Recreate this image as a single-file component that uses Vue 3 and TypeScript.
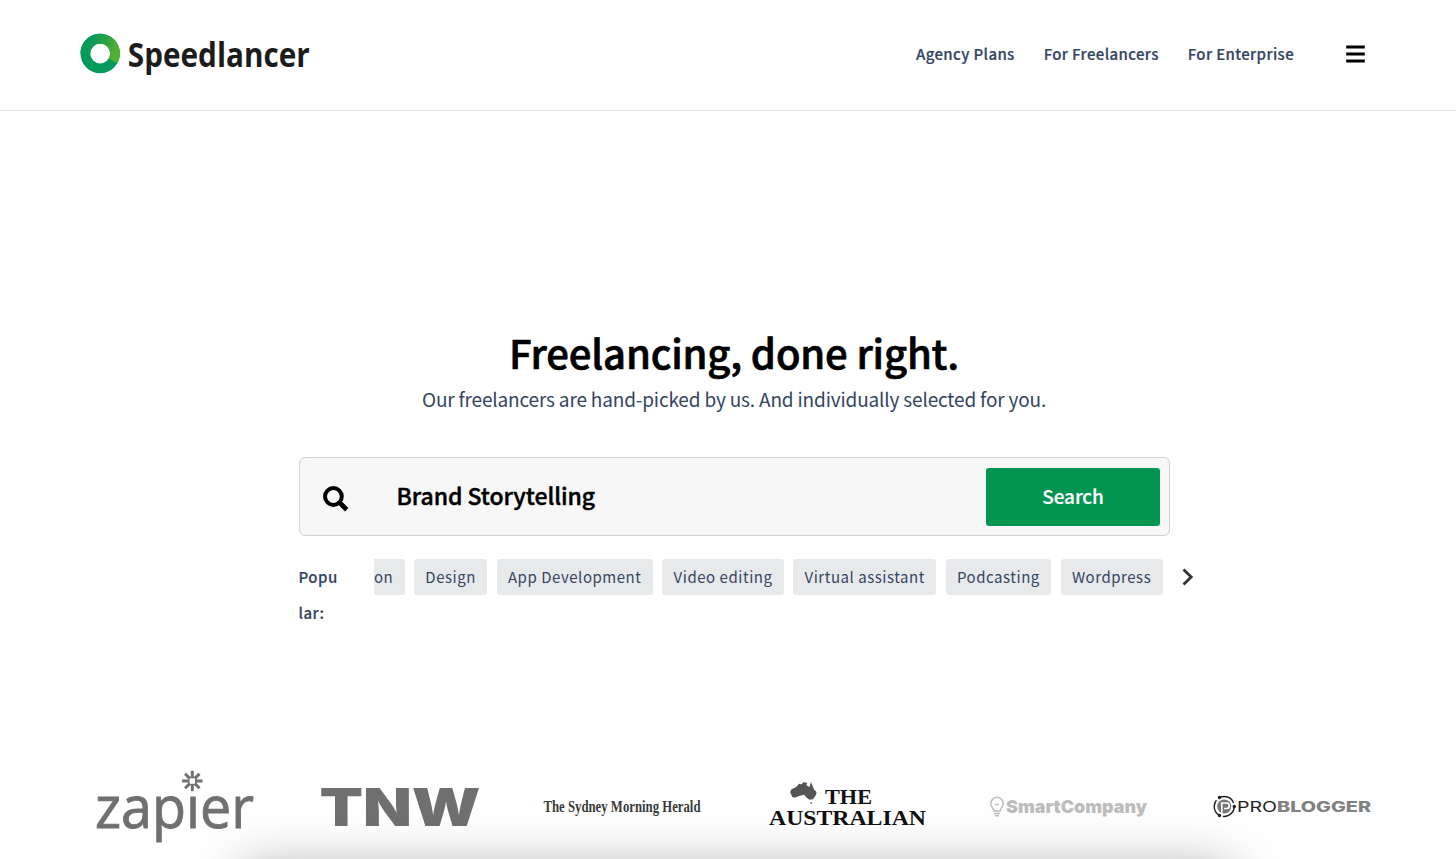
<script setup lang="ts">
interface NavLink {
  id: string
  label: string
}

const links: NavLink[] = [
  { id: 'agency', label: 'Agency Plans' },
  { id: 'freelancers', label: 'For Freelancers' },
  { id: 'enterprise', label: 'For Enterprise' },
]

const tags: string[] = [
  'on',
  'Design',
  'App Development',
  'Video editing',
  'Virtual assistant',
  'Podcasting',
  'Wordpress',
]

const starAngles: number[] = [0, 45, 90, 135, 180, 225, 270, 315]
</script>

<template>
  <div class="page">
    <header class="header">
      <svg class="brand" width="240" height="64" viewBox="0 -4 240 64">
        <defs>
          <linearGradient id="ring" x1="0" y1="0.3" x2="1" y2="0.6">
            <stop offset="0.1" stop-color="#079a5a" />
            <stop offset="0.6" stop-color="#2fa344" />
            <stop offset="1" stop-color="#52b030" />
          </linearGradient>
        </defs>
        <circle cx="20.2" cy="27.5" r="14.8" fill="none" stroke="#049a5c" stroke-width="9.8" />
        <path d="M5.4 27.5A14.8 14.8 0 1 1 33 34.9" fill="none" stroke="url(#ring)" stroke-width="9.8" />
        <text x="47.8" y="40.5" class="brand-text" textLength="182" lengthAdjust="spacingAndGlyphs">Speedlancer</text>
      </svg>

      <nav class="nav">
        <a v-for="link in links" :key="link.id" class="nav-link">{{ link.label }}</a>
        <button class="burger" aria-label="Menu">
          <svg width="19" height="18" viewBox="0 0 19 18">
            <path d="M0.2 2h18.6M0.2 9h18.6M0.2 16h18.6" stroke="#000" stroke-width="3" />
          </svg>
        </button>
      </nav>
    </header>

    <main class="hero">
      <h1 class="title">Freelancing, done right.</h1>
      <p class="subtitle">Our freelancers are hand-picked by us. And individually selected for you.</p>

      <div class="search">
        <svg class="search-icon" width="26" height="26" viewBox="0 0 26 26">
          <circle cx="10.4" cy="10.5" r="8.4" fill="none" stroke="#000" stroke-width="4" />
          <path d="M16.5 16.5L23.7 23.7" stroke="#000" stroke-width="4.8" />
        </svg>
        <span class="search-text">Brand Storytelling</span>
        <button class="search-btn">Search</button>
      </div>

      <div class="popular">
        <span class="popular-label">Popular:</span>
        <div class="tags">
          <span v-for="tag in tags" :key="tag" class="tag">{{ tag }}</span>
        </div>
        <svg class="next" width="12" height="18" viewBox="0 0 12 18">
          <path d="M1.5 1.5L9.2 9L1.5 16.5" fill="none" stroke="#333" stroke-width="2.8" />
        </svg>
      </div>
    </main>

    <section class="logos">
      <!-- zapier -->
      <svg width="158" height="90" viewBox="0 0 158 90">
        <text x="-1" y="63" class="zapier" textLength="159" lengthAdjust="spacingAndGlyphs">zapier</text>
        <rect x="85" y="5" width="22" height="22" fill="#fff" />
        <g stroke="#707070" stroke-width="3">
          <line
            v-for="angle in starAngles"
            :key="angle"
            x1="96.3" y1="12.3" x2="96.3" y2="5.8"
            :transform="`rotate(${angle} 96.3 16)`"
          />
        </g>
        <rect x="92.8" y="12.5" width="7" height="7" fill="none" stroke="#707070" stroke-width="1.5" />
      </svg>

      <!-- TNW -->
      <svg width="158" height="90" viewBox="0 0 158 90">
        <text x="0.5" y="61" class="tnw" textLength="161" lengthAdjust="spacingAndGlyphs">TNW</text>
      </svg>

      <!-- The Sydney Morning Herald -->
      <svg width="158" height="90" viewBox="0 0 158 90">
        <text x="0.5" y="47" class="smh" textLength="157" lengthAdjust="spacingAndGlyphs">The Sydney Morning Herald</text>
      </svg>

      <!-- The Australian -->
      <svg width="158" height="90" viewBox="0 0 158 90">
        <path
          d="M24 28L25.5 25L31 22.5L34 18.8L37 19.5L39.5 17L43.5 18L42.5 20.5L46 22.5L47.5 17L49.5 21L51 25L54 28L53.5 31L50 36L46 36.5L42.5 34L40 31L34 32.5L29 34.5L26.5 33.5Z"
          transform="translate(3 1.8) scale(0.88 0.9)" fill="#555"
        />
        <circle cx="45.2" cy="37.8" r="0.9" fill="#555" />
        <text x="59" y="39" class="australian" textLength="47" lengthAdjust="spacingAndGlyphs">THE</text>
        <text x="3" y="59.5" class="australian" textLength="157" lengthAdjust="spacingAndGlyphs">AUSTRALIAN</text>
      </svg>

      <!-- SmartCompany -->
      <svg width="158" height="90" viewBox="0 0 158 90">
        <path d="M4 46C3.5 43.5 0.8 42 0.8 38.5A6.2 6.2 0 0 1 13.2 38.5C13.2 42 10.5 43.5 10 46ZM4 48.5H10M5 50.8H9M5 39.5H9" fill="none" stroke="#bdbdbd" stroke-width="1.5" />
        <text x="16" y="47.5" class="smart" textLength="141" lengthAdjust="spacingAndGlyphs">SmartCompany</text>
      </svg>

      <!-- ProBlogger -->
      <svg width="158" height="90" viewBox="0 0 158 90">
        <circle cx="11.2" cy="41.5" r="10" fill="none" stroke="#222" stroke-width="1.4" stroke-dasharray="17 4" />
        <circle cx="11.2" cy="41.5" r="7" fill="#777" />
        <g fill="#222">
          <circle cx="6.5" cy="32.5" r="1.7" />
          <circle cx="21.3" cy="41.5" r="1.7" />
          <circle cx="6.5" cy="50.5" r="1.7" />
        </g>
        <path d="M8.8 48V38H13.5A2.5 2.5 0 0 1 13.5 43.5H11" fill="none" stroke="#fff" stroke-width="1.6" />
        <text x="24" y="46.5" class="pro" textLength="40" lengthAdjust="spacingAndGlyphs">PRO</text>
        <text x="64" y="46.5" class="blogger" textLength="94" lengthAdjust="spacingAndGlyphs">BLOGGER</text>
      </svg>
    </section>

    <div class="sheet"></div>
  </div>
</template>

<style>
body {
  margin: 0;
  background: #fff;
}
</style>

<style scoped>
.page {
  position: relative;
  height: 859px;
  overflow: hidden;
  background: #fff;
  color: #344563;
  font-family: 'Noto Sans CJK JP', 'Noto Sans CJK SC', 'Open Sans', sans-serif;
}

/* ── HEADER ── */
.header {
  display: flex;
  align-items: center;
  justify-content: space-between;
  box-sizing: border-box;
  height: 111px;
  padding: 0 91px 2px 80px;
  border-bottom: 1px solid #e2e2e2;
}
.brand { overflow: visible; }
.brand-text { font: 700 33.5px 'Open Sans', sans-serif; fill: #1c1c1c; }

.nav { display: flex; align-items: center; }
.nav-link {
  margin-right: 29px;
  font-size: 15px;
  font-weight: 500;
  line-height: 24px;
  letter-spacing: 0.36px;
  -webkit-text-stroke: 0.2px currentColor;
}
.burger {
  display: flex;
  margin-left: 23px;
  padding: 0;
  border: none;
  background: none;
}

/* ── HERO ── */
.hero {
  width: 871px;
  margin: 0 auto;
  padding: 214px 0 0 12px;
}
.title {
  margin: 0;
  color: #000;
  font-size: 40px;
  font-weight: 500;
  line-height: 54px;
  letter-spacing: -0.17px;
  text-align: center;
  white-space: nowrap;
  -webkit-text-stroke: 0.7px currentColor;
}
.subtitle {
  margin: 5px 0 0;
  font-size: 19px;
  line-height: 30px;
  letter-spacing: -0.165px;
  text-align: center;
  white-space: nowrap;
}

.search {
  display: flex;
  align-items: center;
  box-sizing: border-box;
  height: 79px;
  margin-top: 43px;
  padding: 0 9px 0 23px;
  border: 1px solid #d3d3d3;
  border-radius: 6px;
  background: #f7f7f7;
}
.search-icon { margin-top: 4px; }
.search-text {
  flex: 1;
  margin: 0 0 3px 48px;
  color: #000;
  font-size: 23px;
  font-weight: 500;
  line-height: 36px;
  letter-spacing: -0.06px;
  -webkit-text-stroke: 0.45px currentColor;
}
.search-btn {
  width: 174px;
  height: 58px;
  padding: 0 0 2px 1px;
  border: none;
  border-radius: 3px;
  background: #029551;
  color: #fff;
  font-family: inherit;
  font-size: 19px;
  font-weight: 500;
  letter-spacing: -0.1px;
  -webkit-text-stroke: 0.2px currentColor;
}

.popular {
  display: flex;
  align-items: flex-start;
  width: 895px;
  margin-top: 23px;
}
.popular-label {
  width: 42px;
  font-size: 15px;
  font-weight: 500;
  line-height: 36px;
  letter-spacing: 0.5px;
  word-break: break-all;
  -webkit-text-stroke: 0.2px currentColor;
}
.tags {
  display: flex;
  gap: 9.4px;
  margin-left: 33px;
}
.tag {
  padding: 0 11.3px 0 11.4px;
  border-radius: 3px;
  background: #e8e9eb;
  font-size: 15px;
  line-height: 36px;
  letter-spacing: 0.535px;
  white-space: nowrap;
}
.tag:first-child { padding-left: 0.4px; border-radius: 0 3px 3px 0; }
.next { margin: 9px 0 0 auto; }

/* ── LOGOS ── */
.logos {
  display: flex;
  justify-content: space-between;
  width: 1275px;
  margin: 134px 0 0 96px;
}
.logos svg { overflow: visible; }
.zapier { font: 400 58px 'Open Sans', sans-serif; fill: #707070; stroke: #707070; stroke-width: 0.9px; }
.tnw { font: 900 52px Inter, sans-serif; fill: #707070; }
.smh { font: 700 17px 'Liberation Serif', serif; fill: #3a3a3a; }
.australian { font: 700 22px 'Liberation Serif', serif; fill: #111; }
.smart { font: 900 18px Inter, sans-serif; fill: #bdbdbd; }
.pro { font: 400 14px Inter, sans-serif; fill: #222; }
.blogger { font: 800 14px Inter, sans-serif; fill: #808080; }

/* shadow of the panel that starts under the fold */
.sheet {
  position: absolute;
  top: 869px;
  left: 242px;
  width: 990px;
  height: 200px;
  box-shadow: 0 0 50px rgba(0, 0, 0, 0.35);
}
</style>
